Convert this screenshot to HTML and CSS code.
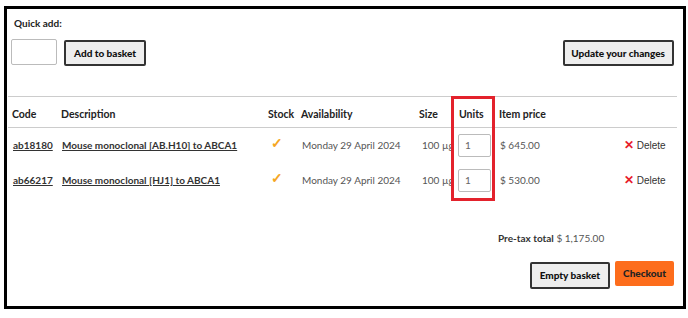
FILE: index.html
```html
<!DOCTYPE html>
<html>
<head>
<meta charset="utf-8">
<link rel="stylesheet" href="styles.css">
</head>
<body>
<div class="frame">
  <div class="quick-label">Quick add:</div>
  <div class="toolbar">
    <div class="quick">
      <input class="quick-input" type="text">
      <button class="btn">Add to basket</button>
    </div>
    <button class="btn update">Update your changes</button>
  </div>
  <div class="table-wrap">
    <table class="basket">
      <colgroup>
        <col class="c-code"><col class="c-desc"><col class="c-stock"><col class="c-avail"><col class="c-size"><col class="c-units"><col class="c-price"><col class="c-del">
      </colgroup>
      <thead>
        <tr>
          <th>Code</th><th>Description</th><th>Stock</th><th>Availability</th><th>Size</th><th class="units">Units</th><th>Item price</th><th></th>
        </tr>
      </thead>
      <tbody>
        <tr>
          <td><a class="link">ab18180</a></td>
          <td><a class="link">Mouse monoclonal [AB.H10] to ABCA1</a></td>
          <td class="check">✓</td>
          <td class="muted">Monday 29 April 2024</td>
          <td class="muted size">100 µg</td>
          <td class="units"><input class="unit-input" type="text" value="1"></td>
          <td class="muted">$ 645.00</td>
          <td class="del"><span class="x">✕</span> Delete</td>
        </tr>
        <tr>
          <td><a class="link">ab66217</a></td>
          <td><a class="link">Mouse monoclonal [HJ1] to ABCA1</a></td>
          <td class="check">✓</td>
          <td class="muted">Monday 29 April 2024</td>
          <td class="muted size">100 µg</td>
          <td class="units"><input class="unit-input" type="text" value="1"></td>
          <td class="muted">$ 530.00</td>
          <td class="del"><span class="x">✕</span> Delete</td>
        </tr>
      </tbody>
    </table>
    <div class="highlight"></div>
  </div>
  <div class="total"><b>Pre-tax total</b> $ 1,175.00</div>
  <div class="actions">
    <button class="btn empty">Empty basket</button>
    <button class="btn checkout">Checkout</button>
  </div>
</div>
</body>
</html>
```
FILE: styles.css
```css
* { box-sizing: border-box; }
html, body { margin: 0; padding: 0; background: #fff; }
body {
  font-family: "Lato", "Open Sans", sans-serif;
  font-size: 10px;
  color: #222;
  padding: 6px 2px 0 4px;
}
.frame {
  width: 682px;
  height: 303px;
  border: 3px solid #000;
  padding: 0 9px 0 1px;
}
.quick-label {
  font-weight: 700;
  font-size: 10px;
  padding: 8px 0 0 6px;
  height: 31px;
}
.toolbar {
  display: flex;
  justify-content: space-between;
  align-items: flex-start;
  padding-left: 3px;
}
.quick { display: flex; gap: 7px; }
.quick-input {
  width: 46px;
  height: 26px;
  border: 1px solid #bbb;
  border-radius: 2px;
  margin-top: -1px;
}
.btn {
  font-family: inherit;
  font-weight: 900;
  font-size: 10px;
  color: #111;
  background: #eeeeee;
  border: 2px solid #333;
  border-radius: 2px;
  height: 26px;
  padding: 0 8px;
  cursor: pointer;
}
.btn.update { padding: 0 7px 0 6px; }
.table-wrap {
  position: relative;
  margin-top: 30px;
}
.basket {
  width: 669px;
  border-collapse: collapse;
  table-layout: fixed;
}
.c-code { width: 49px; }
.c-desc { width: 207px; }
.c-stock { width: 33px; }
.c-avail { width: 118px; }
.c-size { width: 37px; }
.c-units { width: 43px; }
.c-price { width: 125px; }
.c-del { width: 57px; }
.basket th {
  text-align: left;
  font-weight: 700;
  font-size: 10.5px;
  height: 31px;
  padding: 3px 0 0 4px;
  border-top: 1px solid #ccc;
  border-bottom: 1px solid #ccc;
  white-space: nowrap;
  color: #222;
}
.basket th.units { padding-left: 7px; }
.basket td {
  height: 35px;
  padding: 0 0 0 5px;
  white-space: nowrap;
  vertical-align: middle;
}
.link {
  color: #333;
  font-weight: 700;
  text-decoration: underline;
}
.muted { color: #555; }
.basket td.size { padding-left: 7px; }
.basket td.check {
  color: #f5a623;
  font-size: 14px;
  font-weight: 700;
  padding-left: 7px;
  vertical-align: top;
  padding-top: 6px;
}
.basket td.units { padding-left: 6px; }
.unit-input {
  width: 33px;
  height: 23px;
  border: 1px solid #bbb;
  border-radius: 2px;
  font-family: inherit;
  font-size: 10px;
  color: #666;
  padding: 0 6px;
}
.del { color: #333; font-family: "Liberation Sans", Arial, sans-serif; }
.basket td.del { padding-left: 4px; vertical-align: top; padding-top: 10px; }
.x { color: #e8202a; font-weight: 700; font-size: 12px; }
.highlight {
  position: absolute;
  left: 443px;
  top: 0;
  width: 44px;
  height: 105px;
  border: 3px solid #e3222c;
}
.total {
  margin: 34px 0 0 490px;
  color: #555;
}
.total b { color: #333; }
.actions {
  display: flex;
  justify-content: flex-end;
  gap: 5px;
  margin-top: 18px;
  align-items: flex-start;
}
.actions .btn.empty { height: 27px; padding: 0 8px; }
.actions .btn.checkout {
  background: #fd6d1c;
  border-color: #fd6d1c;
  color: #222;
  height: 25px;
  margin-top: -1px;
  padding: 0 6px;
}
```
